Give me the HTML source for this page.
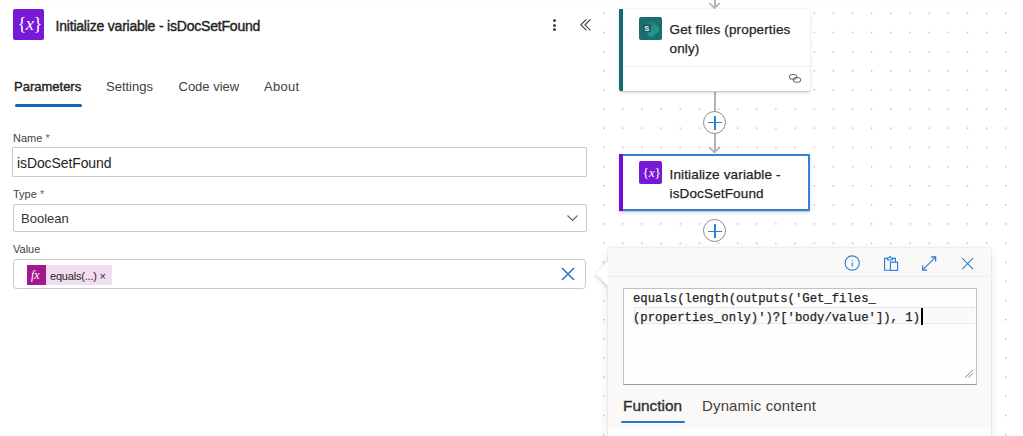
<!DOCTYPE html>
<html><head><meta charset="utf-8">
<style>
*{box-sizing:border-box;margin:0;padding:0}
html,body{width:1023px;height:436px;overflow:hidden;background:#fff;font-family:"Liberation Sans",sans-serif;color:#242424}
.abs{position:absolute}
.t{position:absolute;white-space:nowrap;line-height:1}
#canvas{position:absolute;left:598px;top:0;width:425px;height:436px;background:#fff}
#topline{position:absolute;left:0;top:0;width:1023px;height:1px;background:#fbfbfb}
.inp{position:absolute;left:12px;width:575px;border:1px solid #c8c8c8;border-radius:2px;background:#fff}
.lbl{position:absolute;left:13px;font-size:11px;color:#424242}
.card{position:absolute;left:619px;width:191px;background:#fff;border-radius:3px;box-shadow:0 1.6px 3.6px rgba(0,0,0,.13),0 0.3px 0.9px rgba(0,0,0,.11)}
.plus{position:absolute;width:23px;height:23px;border:1px solid #8a8a8a;border-radius:50%;background:#fff}
</style></head><body>
<svg id="canvas" width="425" height="436"><defs><pattern id="dp" patternUnits="userSpaceOnUse" x="5.0" y="12.6" width="19.15" height="19.15"><rect x="0" y="0" width="1.2" height="1.4" fill="#acacac"/></pattern></defs><rect width="425" height="436" fill="url(#dp)"/></svg>
<div id="topline"></div>

<!-- header -->
<div class="abs" style="left:13px;top:9px;width:31px;height:31px;background:#7719d6;border-radius:2px"></div>
<div class="t" style="left:17.5px;top:14.5px;font-family:'Liberation Serif';color:#fff;font-size:18.5px;letter-spacing:-0.6px">{<i>x</i>}</div>
<div class="t" style="left:55.5px;top:19px;font-size:14px;font-weight:400;letter-spacing:-0.2px;color:#242424;-webkit-text-stroke:0.4px #242424">Initialize variable - isDocSetFound</div>

<!-- header icons -->
<div class="abs" style="left:553px;top:18.5px;width:3px;height:3px;border-radius:50%;background:#424242"></div>
<div class="abs" style="left:553px;top:23.5px;width:3px;height:3px;border-radius:50%;background:#424242"></div>
<div class="abs" style="left:553px;top:28.2px;width:3px;height:3px;border-radius:50%;background:#424242"></div>
<svg class="abs" style="left:578px;top:17px" width="16" height="16"><path d="M8.4 2.3 L2.9 7.8 L8.4 13.4 M12.5 2.3 L7 7.8 L12.5 13.4" fill="none" stroke="#3a3a3a" stroke-width="1.1"/></svg>

<!-- tabs -->
<div class="t" style="left:14px;top:80px;font-size:13px;font-weight:400;-webkit-text-stroke:0.4px #242424">Parameters</div>
<div class="abs" style="left:15px;top:103.5px;width:67px;height:3px;background:#1066bb;border-radius:1.5px"></div>
<div class="t" style="left:106px;top:80px;font-size:13px;color:#424242">Settings</div>
<div class="t" style="left:178.5px;top:80px;font-size:13px;color:#424242">Code view</div>
<div class="t" style="left:264px;top:80px;font-size:13px;color:#424242;letter-spacing:0.3px">About</div>

<!-- fields -->
<div class="lbl t" style="top:133px">Name <span style="color:#7d5a4c">*</span></div>
<div class="inp" style="top:147px;height:30px;border-radius:1px"></div>
<div class="t" style="left:17px;top:156px;font-size:14px;letter-spacing:-0.1px">isDocSetFound</div>

<div class="lbl t" style="top:189px">Type <span style="color:#7d5a4c">*</span></div>
<div class="inp" style="top:203.5px;height:28px;left:13px;width:574px"></div>
<div class="t" style="left:21px;top:212px;font-size:13px;color:#333">Boolean</div>

<svg class="abs" style="left:566px;top:213px" width="14" height="10"><path d="M1.5 2.5 L6.5 7.5 L11.5 2.5" fill="none" stroke="#616161" stroke-width="1.1"/></svg>
<div class="lbl t" style="top:244px">Value</div>
<div class="inp" style="top:259px;height:30px;left:13px;width:573px;border-radius:3.5px"></div>
<div class="abs" style="left:27px;top:265.3px;width:85px;height:19.5px;background:#f2ddf0"></div>
<div class="abs" style="left:27px;top:265.3px;width:19px;height:19.5px;background:#a3188c"></div>
<div class="t" style="left:50px;top:271px;font-size:11px;letter-spacing:-0.2px">equals(...) ×</div>
<div class="t" style="left:31px;top:268.5px;font-family:'Liberation Serif';font-style:italic;color:#fff;font-size:12px">fx</div>
<svg class="abs" style="left:560px;top:266px" width="16" height="16"><path d="M2 2 L14 14 M14 2 L2 14" fill="none" stroke="#2a74c6" stroke-width="1.5"/></svg>

<!-- canvas cards -->
<!-- connectors -->
<div class="abs" style="left:713.5px;top:0;width:2px;height:8px;background:#b4b4b8"></div>
<svg class="abs" style="left:706px;top:0" width="18" height="10"><path d="M3.3 3.2 L8.5 8 L13.7 3.2" fill="none" stroke="#b4b4b8" stroke-width="1.8"/></svg>
<div class="abs" style="left:713.5px;top:92px;width:2px;height:60px;background:#b4b4b8"></div>
<svg class="abs" style="left:706px;top:144px" width="18" height="10"><path d="M3 3.2 L8.5 8.2 L14 3.2" fill="none" stroke="#b4b4b8" stroke-width="1.8"/></svg>
<div class="plus" style="left:703px;top:111px"></div>
<div class="abs" style="left:708px;top:122px;width:14px;height:1.2px;background:#2f7fd6"></div>
<div class="abs" style="left:714.4px;top:116px;width:1.2px;height:13.5px;background:#2f7fd6"></div>
<div class="plus" style="left:703px;top:219px"></div>
<div class="abs" style="left:708px;top:230.5px;width:14px;height:1.2px;background:#2f7fd6"></div>
<div class="abs" style="left:714.4px;top:224px;width:1.2px;height:14px;background:#2f7fd6"></div>

<!-- card 1 -->
<div class="card" style="top:8.6px;height:82.6px;border-radius:2px"></div>
<div class="abs" style="left:619px;top:8.6px;width:3.5px;height:82.6px;background:#146b6b;border-radius:1px 0 0 2px"></div>
<div class="abs" style="left:623px;top:66px;width:187px;height:1px;background:#eeeeee"></div>
<div class="abs" style="left:639px;top:17px;width:23px;height:23px;background:#1b6e6e;border-radius:2px"></div>
<svg class="abs" style="left:639px;top:17px" width="23" height="23"><circle cx="12.5" cy="8.3" r="4.6" fill="#1f7f7c"/><circle cx="16.3" cy="12.3" r="4" fill="#2a8f8b"/><circle cx="12.3" cy="16.2" r="3.6" fill="#249591"/><rect x="3.8" y="7.2" width="8" height="8" rx="0.8" fill="#135f5d"/><text x="5.3" y="13.6" font-family="Liberation Sans" font-size="7.5" font-weight="700" fill="#e8f4f4">S</text></svg>
<div class="t" style="left:669.5px;top:20px;font-size:13.5px;line-height:19px;width:135px;white-space:normal;color:#242424;letter-spacing:0.15px;-webkit-text-stroke:0.25px #242424">Get files (properties only)</div>
<svg class="abs" style="left:788px;top:73px" width="15" height="11"><rect x="1.4" y="1.5" width="7.4" height="4.6" rx="2.3" fill="none" stroke="#5a5a5a" stroke-width="1"/><rect x="5.3" y="4.6" width="7.4" height="4.6" rx="2.3" fill="none" stroke="#5a5a5a" stroke-width="1"/></svg>

<!-- card 2 -->
<div class="card" style="top:153.5px;height:57.5px;width:190.5px;border:2px solid #3582d8;border-left:none;border-radius:0 1.5px 1.5px 0"></div>
<div class="abs" style="left:619px;top:153.5px;width:3.5px;height:57.5px;background:#770bd6"></div>
<div class="abs" style="left:639px;top:161px;width:23px;height:23px;background:#7719d6;border-radius:2px"></div>
<div class="t" style="left:642.5px;top:165.5px;font-family:'Liberation Serif';color:#fff;font-size:13.5px;letter-spacing:-0.3px">{<i>x</i>}</div>
<div class="t" style="left:669.5px;top:165px;font-size:13.5px;line-height:19px;width:135px;white-space:normal;color:#242424;letter-spacing:0.15px;-webkit-text-stroke:0.25px #242424">Initialize variable - isDocSetFound</div>

<!-- popup -->
<div class="abs" style="left:608px;top:248px;width:383px;height:200px;background:#faf9f8;box-shadow:0 0 2px rgba(0,0,0,.12),0 3px 9px rgba(0,0,0,.10)"></div>
<div class="abs" style="left:608px;top:428px;width:383px;height:8px;background:#fff"></div>
<svg class="abs" style="left:590px;top:256px" width="20" height="36"><defs><filter id="bs" x="-50%" y="-50%" width="200%" height="200%"><feGaussianBlur stdDeviation="1.5"/></filter></defs><path d="M18 5 L4.5 18.7 L18 33 Z" fill="rgba(0,0,0,.16)" filter="url(#bs)"/><path d="M19 4.5 L5 17.7 L19 31 Z" fill="#fff"/></svg>
<!-- popup icons -->
<svg class="abs" style="left:843px;top:255px" width="18" height="18"><circle cx="9.2" cy="8" r="7.1" fill="none" stroke="#2b7cd3" stroke-width="1.1"/><rect x="8.65" y="7.3" width="1.1" height="4.3" fill="#2b7cd3"/><circle cx="9.2" cy="5.3" r="0.65" fill="#2b7cd3"/></svg>
<svg class="abs" style="left:882px;top:255px" width="18" height="18"><path d="M8 15.2 H2.6 V3.4 H5.6 M10.4 3.4 H13.4 V7" fill="none" stroke="#2b7cd3" stroke-width="1.15"/><path d="M5.6 3 H6.6 L8 1.3 L9.4 3 H10.4 V5 H5.6 Z" fill="none" stroke="#2b7cd3" stroke-width="1.1"/><rect x="8.4" y="7.2" width="7.2" height="8.2" fill="none" stroke="#2b7cd3" stroke-width="1.15"/></svg>
<svg class="abs" style="left:921px;top:255px" width="18" height="18"><path d="M1.9 14.9 L14.4 2.2" fill="none" stroke="#2b7cd3" stroke-width="1.1"/><path d="M10.1 2 H14.6 V6.6 M1.7 10.5 V15.1 H6.2" fill="none" stroke="#2b7cd3" stroke-width="1.3"/></svg>
<svg class="abs" style="left:959px;top:255px" width="18" height="18"><path d="M3.2 3.2 L14 14.1 M14 3.2 L3.2 14.1" fill="none" stroke="#2b7cd3" stroke-width="1.05"/></svg>
<div class="abs" style="left:608px;top:276px;width:383px;height:1px;background:#efeeed"></div>
<div class="abs" style="left:623px;top:288px;width:354px;height:97px;background:#fefefe;border:1px solid #c3c1bf;border-bottom-color:#9f9d9b"></div>
<div class="abs" style="left:634px;top:307px;width:341px;height:17px;background:#fafafa;border:1.5px solid #e9e9e9;border-right:none"></div>
<svg class="abs" style="left:962px;top:368px" width="14" height="12"><path d="M3 9.6 L11 2 M6.5 9.6 L11 5.3" fill="none" stroke="#8a8886" stroke-width="1"/></svg>
<div class="t" style="left:633px;top:290.3px;font-family:'Liberation Mono';font-size:12.27px;line-height:18.3px;-webkit-text-stroke:0.25px #242424;color:#242424">equals(length(outputs('Get_files_<br>(properties_only)')?['body/value']), 1)</div>
<div class="abs" style="left:921px;top:308px;width:2px;height:17px;background:#000"></div>
<div class="t" style="left:623px;top:397.5px;font-size:15.4px;font-weight:400;-webkit-text-stroke:0.35px #323130;color:#323130">Function</div>
<div class="abs" style="left:621px;top:421px;width:64px;height:2px;background:#1f77d0;border-radius:1px"></div>
<div class="t" style="left:702px;top:398px;font-size:15px;color:#424242;letter-spacing:0.15px">Dynamic content</div>
</body></html>
